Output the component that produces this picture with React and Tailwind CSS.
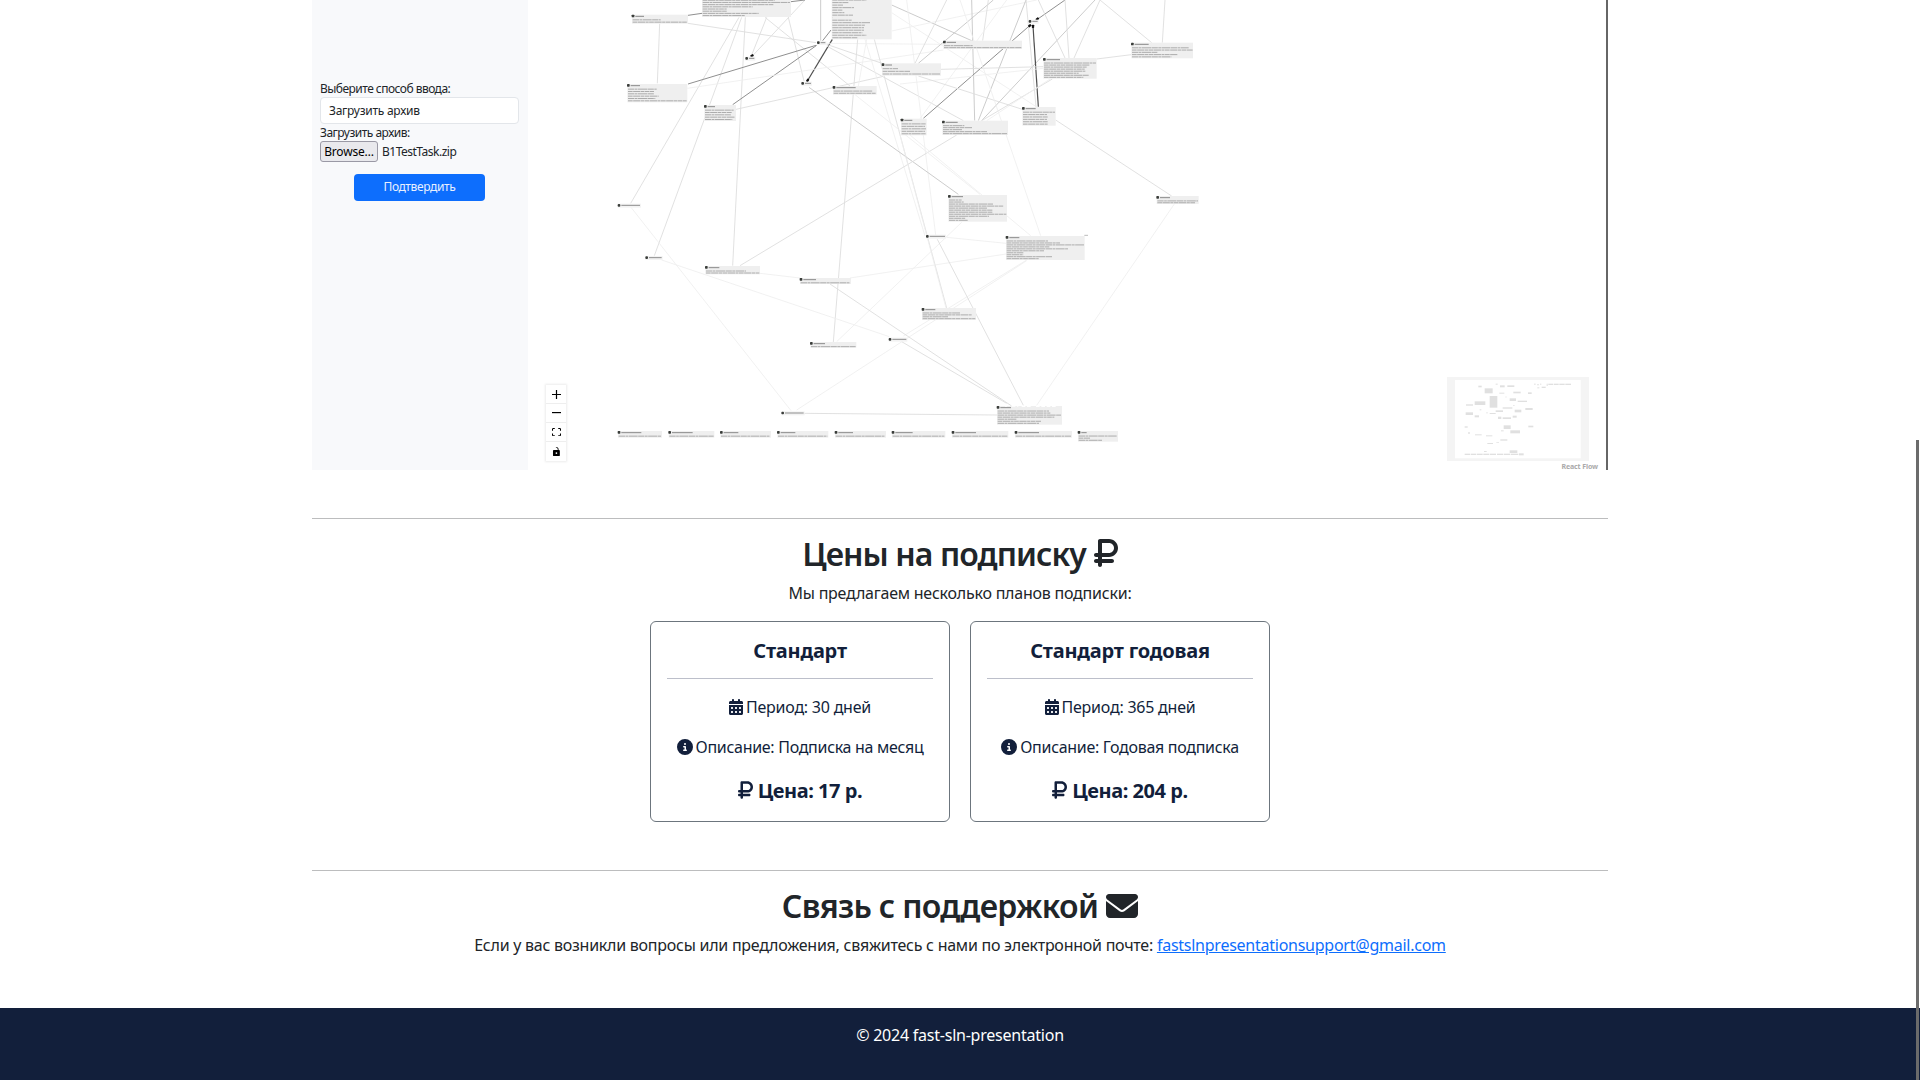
import { FaRubleSign, FaCalendarDays, FaCircleInfo, FaEnvelope } from "react-icons/fa6";

// Diagram units are thirds of a pixel.
// Edge: [x1, y1, x2, y2, tone], tone 0 = faint ... 4 = black
const EDGES = [
  [2064, 46, 2106, 40, 3], [2064, 70, 2448, 128, 1], [1979, 71, 1972, 250, 1],
  [2217, 52, 1892, 610, 1], [2225, 52, 1963, 767, 1], [2236, 52, 2198, 797, 1],
  [2300, 52, 2255, 165, 1], [2415, 0, 2260, 165, 1], [2295, 52, 2550, 258, 1],
  [2365, 52, 2412, 243, 1], [2373, 5, 2415, 0, 3], [2462, 0, 2462, 122, 2],
  [2493, 90, 2468, 122, 3], [2497, 118, 2422, 243, 4], [2448, 136, 2064, 252, 3],
  [2450, 136, 2198, 314, 3], [2062, 265, 2830, 150, 0], [2208, 328, 2646, 230, 1],
  [2480, 130, 2830, 133, 0], [2480, 133, 2646, 190, 1], [2480, 138, 2890, 362, 1],
  [2573, 118, 2500, 1026, 1], [2600, 118, 2575, 258, 0], [2623, 118, 2840, 924, 1],
  [2595, 118, 2775, 708, 0], [2675, 15, 2915, 122, 2], [2675, 38, 3110, 321, 0],
  [2675, 93, 3110, 0, 0], [2720, 0, 2807, 705, 0], [2427, 262, 2875, 583, 2],
  [2220, 797, 2870, 405, 1], [2565, 284, 2940, 583, 0], [2840, 0, 2745, 190, 1],
  [2980, 0, 2755, 190, 2], [2915, 0, 2924, 362, 2], [2965, 0, 2948, 122, 1],
  [3078, 0, 2935, 362, 2], [3195, 0, 3112, 58, 3], [3285, 0, 2945, 362, 2],
  [3020, 0, 2760, 356, 0], [3090, 76, 2770, 355, 3], [3099, 78, 3115, 320, 4],
  [3078, 0, 3108, 320, 1], [3115, 0, 3195, 174, 1], [3195, 0, 3207, 174, 1],
  [3300, 0, 3222, 174, 1], [3300, 0, 3455, 128, 1], [3495, 0, 3487, 128, 1],
  [3290, 177, 3394, 164, 1], [2823, 208, 3130, 200, 1], [2700, 252, 3130, 205, 0],
  [3157, 237, 2945, 362, 1], [3150, 237, 2960, 362, 0], [3167, 360, 3515, 588, 1],
  [2755, 228, 3067, 328, 1], [2880, 0, 3122, 707, 0], [2730, 405, 3092, 707, 0],
  [3523, 612, 3110, 1216, 0], [2885, 667, 2510, 1025, 0], [2840, 712, 3018, 730, 0],
  [2550, 834, 3018, 762, 0], [3080, 780, 2710, 1008, 0], [3080, 782, 2390, 1230, 0],
  [2812, 718, 3070, 1216, 1], [2490, 852, 3035, 1218, 1], [2705, 1025, 3020, 1210, 1],
  [2700, 405, 2838, 924, 0], [2412, 1240, 2991, 1245, 1], [1893, 622, 2373, 1232, 0],
  [1985, 780, 2668, 1010, 0], [2280, 820, 2400, 834, 0],
];
const TONES = [
  ["#eeeeee", 2.5], ["#dedede", 2.7], ["#c6c6c6", 2.7], ["#8f8f8f", 3], ["#505050", 3.6],
];

// Node: [x, y, w, h, titleWidth, [row widths]]
const NODES = [
  [1896, 44, 168, 27, 26, [84, 163]],
  [2106, -12, 267, 63, 0, [260, 216, 262, 213, 150, 72, 72, 168, 126]],
  [2495, -14, 180, 132, 0, [72, 102, 48, 32, 65, 30, 36, 62, 0, 58, 113, 98, 95, 95, 90, 102, 75]],
  [1882, 252, 180, 55, 28, [86, 78, 78, 92, 82, 176]],
  [2113, 315, 95, 48, 22, [86, 80, 78, 90, 82]],
  [2499, 258, 131, 26, 58, [116, 126]],
  [2646, 190, 177, 37, 20, [46, 82, 172]],
  [2703, 356, 77, 50, 24, [72, 70, 73, 70, 72]],
  [2830, 122, 236, 25, 28, [86, 232]],
  [2827, 362, 197, 43, 36, [64, 88, 58, 132, 192]],
  [3067, 321, 100, 56, 30, [96, 72, 74, 72, 74, 74]],
  [3130, 174, 160, 62, 40, [156, 136, 128, 122, 124, 104, 134, 118]],
  [3394, 128, 185, 47, 42, [170, 182, 76, 136, 118]],
  [2845, 585, 176, 80, 34, [38, 44, 132, 164, 114, 130, 130, 172, 120, 50, 56]],
  [3470, 588, 126, 24, 30, [122, 114]],
  [3018, 708, 236, 72, 30, [124, 160, 232, 128, 184, 112, 50, 50, 136, 96]],
  [2116, 798, 164, 25, 32, [120, 160]],
  [2400, 834, 153, 18, 38, [148]],
  [2431, 1026, 138, 17, 34, [134]],
  [2766, 924, 162, 36, 30, [112, 148, 76, 158]],
  [2991, 1218, 195, 56, 32, [154, 158, 190, 170, 56, 130, 124]],
  [1854, 1293, 132, 20, 60, [127]],
  [2006, 1293, 137, 20, 62, [133]],
  [2161, 1293, 152, 20, 44, [147]],
  [2332, 1293, 153, 20, 44, [148]],
  [2505, 1293, 153, 20, 44, [148]],
  [2676, 1293, 160, 20, 52, [155]],
  [2856, 1293, 169, 20, 62, [164]],
  [3045, 1293, 171, 20, 62, [166]],
  [3234, 1293, 120, 32, 16, [114, 34, 70]],
];

// Nodes that hold only a title: [x, y, titleWidth]
const LABELS = [
  [2455, 128, 14], [2240, 175, 16], [2408, 250, 18], [3090, 64, 16], [2782, 709, 46],
  [1857, 616, 56], [1940, 773, 38], [2670, 1018, 42], [2348, 1239, 56],
];

// Arrow heads: [x, y, rotation]
const ARROWS = [
  [2256, 167, 150], [2423, 241, 120], [3089, 77, -40], [3099, 79, -90], [3112, 57, 140],
];

const MINI = [
  [176, 76, 10, 5], [228, 70, 6, 3], [241, 75, 14, 6], [263, 75, 21, 5], [195, 84, 24, 15],
  [239, 97, 15, 3], [281, 94, 22, 5], [325, 96, 11, 5], [210, 107, 23, 35], [165, 123, 32, 11],
  [270, 114, 19, 8], [294, 121, 28, 4], [139, 132, 21, 4], [249, 141, 29, 4], [317, 143, 22, 6],
  [138, 156, 22, 8], [165, 165, 13, 6], [228, 150, 22, 5], [285, 148, 20, 8], [210, 158, 18, 3],
  [235, 169, 10, 7], [249, 171, 25, 5], [279, 166, 12, 6], [252, 195, 21, 11], [326, 196, 15, 5],
  [135, 198, 9, 4], [244, 210, 8, 3], [272, 210, 29, 9], [166, 222, 20, 3], [199, 225, 19, 3],
  [145, 216, 6, 4], [242, 237, 21, 4], [203, 248, 17, 3], [230, 246, 8, 2], [193, 272, 8, 3],
  [270, 270, 23, 8], [135, 280, 16, 4], [153, 280, 16, 4], [171, 280, 18, 4], [191, 280, 18, 4],
  [211, 280, 18, 4], [232, 280, 18, 4], [252, 280, 20, 4], [274, 280, 22, 4], [298, 279, 14, 6],
  [343, 70, 5, 3], [353, 71, 4, 4], [361, 70, 4, 3], [381, 70, 3, 7], [386, 70, 14, 4],
  [402, 70, 15, 4], [419, 70, 16, 4], [437, 70, 17, 4], [353, 81, 6, 3], [366, 79, 12, 4],
  [180, 147, 5, 3], [200, 156, 4, 3], [257, 109, 4, 2], [280, 135, 5, 2],
];

function Diagram() {
  return (
    <svg className="block h-[470px] w-[800px] shrink-0" viewBox="1584 0 2400 1410">
      {EDGES.map(([a, b, c, d, t], i) => (
        <line key={i} x1={a} y1={b} x2={c} y2={d} stroke={TONES[t][0]} strokeWidth={TONES[t][1]} />
      ))}
      {ARROWS.map(([x, y, r], i) => (
        <g key={i} transform={`translate(${x} ${y}) rotate(${r})`}>
          <rect x="-5" y="-3.5" width="10" height="7" rx="2" fill="#111" />
        </g>
      ))}
      {NODES.map(([x, y, w, h, title, rows], i) => {
        const top = title ? 12 : 3;
        const step = (h - top - 1) / rows.length;
        return (
          <g key={i}>
            <rect x={x} y={y} width={w} height={h} fill="#efefef" />
            {title > 0 && (
              <>
                <rect x={x - 1} y={y} width="8" height="8" rx="2" fill="#3a3d3a" />
                <line x1={x + 10} x2={x + 10 + title} y1={y + 5} y2={y + 5} stroke="#8a8a8a" strokeWidth="3" />
              </>
            )}
            {rows.map((r, j) => (
              <line
                key={j}
                x1={x + 2}
                x2={x + 2 + r}
                y1={y + top + step * (j + 0.5)}
                y2={y + top + step * (j + 0.5)}
                stroke="#989898"
                strokeWidth="2.3"
                strokeDasharray={j % 2 ? "14 1.5 22 1.5 9 1.5" : "19 1.5 8 1.5 27 1.5"}
              />
            ))}
          </g>
        );
      })}
      {LABELS.map(([x, y, w], i) => (
        <g key={i}>
          <rect x={x - 4} y={y - 5} width={w + 14} height="12" fill="#f3f3f3" />
          <rect x={x - 4} y={y - 4} width="8" height="8" rx="3" fill="#3a3d3a" />
          <line x1={x + 7} x2={x + 7 + w} y1={y} y2={y} stroke="#8f8f8f" strokeWidth="3" />
        </g>
      ))}
      <line x1="3253" x2="3264" y1="706" y2="706" stroke="#999" strokeWidth="2" />
      <path d="M3000 1213l20 6M3035 1218h20M3065 1219h30M3108 1219h60" stroke="#fff" strokeWidth="4" strokeDasharray="11 5" />
    </svg>
  );
}

const CONTROLS = [
  { box: "0 0 32 32", d: "M32 18.133H18.133V32h-4.266V18.133H0v-4.266h13.867V0h4.266v13.867H32z" },
  { box: "0 0 32 5", d: "M0 0h32v4.2H0z" },
  {
    box: "0 0 32 30",
    d: "M3.692 4.63c0-.53.4-.938.939-.938h5.215V0H4.708C2.13 0 0 2.054 0 4.63v5.216h3.692V4.631zM27.354 0h-5.2v3.692h5.17c.53 0 .984.4.984.939v5.215H32V4.631A4.624 4.624 0 0027.354 0zm.954 24.83c0 .532-.4.94-.939.94h-5.215v3.768h5.215c2.577 0 4.631-2.13 4.631-4.707v-5.139h-3.692v5.139zm-23.677.94c-.531 0-.939-.4-.939-.94v-5.138H0v5.139c0 2.577 2.13 4.707 4.708 4.707h5.138V25.77H4.631z",
  },
  {
    box: "0 0 25 32",
    d: "M21.333 10.667H19.81V7.619C19.81 3.429 16.38 0 12.19 0c-4.114 1.828-1.37 2.133.305 2.438 1.676.305 4.42 2.59 4.42 5.181v3.048H3.047A3.056 3.056 0 000 13.714v15.238A3.056 3.056 0 003.048 32h18.285a3.056 3.056 0 003.048-3.048V13.714a3.056 3.056 0 00-3.048-3.047zM12.19 24.533a3.056 3.056 0 01-3.047-3.047 3.056 3.056 0 013.047-3.048 3.056 3.056 0 013.048 3.048 3.056 3.056 0 01-3.048 3.047z",
  },
];

function Controls() {
  return (
    <div className="absolute bottom-[9px] left-[18px] flex w-5 flex-col bg-white shadow-[0_0_2px_1px_rgba(0,0,0,0.08)]">
      {CONTROLS.map((c) => (
        <button key={c.d} className="flex h-[19px] items-center justify-center border-b border-[#eee] last:border-b-0">
          <svg viewBox={c.box} className="max-h-[9px] w-[9px]">
            <path d={c.d} />
          </svg>
        </button>
      ))}
    </div>
  );
}

function MiniMap() {
  return (
    <div className="absolute right-[17px] bottom-[9px] h-[84px] w-[142px] bg-[#f4f4f4]">
      <svg viewBox="82 50 426 252" className="h-full w-full">
        <rect x="106" y="59" width="377" height="235" fill="#fff" />
        {MINI.map(([x, y, w, h], i) => (
          <rect key={i} x={x} y={y} width={w} height={h} fill="#e0e0e0" />
        ))}
      </svg>
    </div>
  );
}

function Sidebar() {
  return (
    <aside className="flex w-54 shrink-0 flex-col bg-[#f8f9fb] px-2 pt-20 text-[12px] leading-[17px] tracking-[-0.25px]">
      <label className="tracking-[-0.53px]">Выберите способ ввода:</label>
      <div className="flex h-[27px] w-[199px] items-center rounded-[4px] border border-[#e3e6ea] bg-white px-2">Загрузить архив</div>
      <label className="tracking-[-0.5px]">Загрузить архив:</label>
      <div className="flex items-center gap-1">
        <button className="h-[21px] w-[58px] rounded-[3px] border border-[#9a99a5] bg-[#e9e9ed] text-center leading-[18px] tracking-[-0.18px] text-black">Browse…</button>
        <span className="-mt-px tracking-[-0.5px]">B1TestTask.zip</span>
      </div>
      <button className="mt-3 ml-[34px] h-[27px] w-[131px] rounded-[4px] bg-[#0d6efd] pb-0.5 tracking-[-0.35px] text-[#e8f0ff]">Подтвердить</button>
    </aside>
  );
}

function Plan({ title, period, description, price }) {
  return (
    <article className="flex h-[201px] w-[300px] flex-col items-center rounded-md border border-[#6c757d] px-4 pt-[15px] text-[#121f3b]">
      <h3 className="text-xl leading-7 font-bold tracking-[-0.22px]">{title}</h3>
      <hr className="mt-[13px] w-full border-[#bcbfca]" />
      <p className="mt-4 flex items-center gap-[3px] leading-6">
        <FaCalendarDays className="h-4 w-3.5" />
        <span>{period}</span>
      </p>
      <p className="mt-4 flex items-center gap-[3px] leading-6 tracking-[-0.3px]">
        <FaCircleInfo className="size-4" />
        <span>{description}</span>
      </p>
      <p className="mt-5 flex items-center gap-[5px] text-xl leading-6 font-bold tracking-[-0.45px]">
        <FaRubleSign className="h-5 w-[15px] -translate-y-px" />
        <span>{price}</span>
      </p>
    </article>
  );
}

export default function App() {
  return (
    <div className="relative flex h-[1080px] w-full flex-col overflow-hidden bg-white font-['Noto_Sans',sans-serif] text-base tracking-[-0.23px] text-[#212529]">
      <main className="mx-auto flex w-[1296px] grow flex-col">
        <section className="flex h-[470px]">
          <Sidebar />
          <div className="relative flex grow border-r-2 border-[#666]">
            <Diagram />
            <Controls />
            <MiniMap />
            <span className="absolute right-2 bottom-[-3px] text-[7px] leading-3 font-bold tracking-[-0.1px] text-[#aaa]">React Flow</span>
          </div>
        </section>

        <section className="mt-12 flex h-[352px] flex-col items-center border-t border-[#bcbdbe] pt-4">
          <h2 className="flex items-center gap-2 text-[32px] leading-[38px] font-semibold tracking-[-0.92px]">
            <span>Цены на подписку</span>
            <FaRubleSign className="h-8 w-6 -translate-y-px" />
          </h2>
          <p className="mt-2 leading-6">Мы предлагаем несколько планов подписки:</p>
          <div className="mt-4 flex gap-5">
            <Plan title="Стандарт" period="Период: 30 дней" description="Описание: Подписка на месяц" price="Цена: 17 р." />
            <Plan title="Стандарт годовая" period="Период: 365 дней" description="Описание: Годовая подписка" price="Цена: 204 р." />
          </div>
        </section>

        <section className="flex flex-col items-center border-t border-[#bcbdbe] pt-4">
          <h2 className="flex items-center gap-2 text-[32px] leading-[38px] font-semibold tracking-[-0.68px]">
            <span>Связь с поддержкой</span>
            <FaEnvelope className="size-8" />
          </h2>
          <p className="mt-2 leading-6 tracking-[-0.25px]">
            Если у вас возникли вопросы или предложения, свяжитесь с нами по электронной почте:{" "}
            <a className="text-[#0d6efd] underline">fastslnpresentationsupport@gmail.com</a>
          </p>
        </section>
      </main>

      <footer className="flex h-[72px] justify-center bg-[#121f3b] pt-[15px] leading-6 text-white">© 2024 fast-sln-presentation</footer>
      <div className="absolute top-[440px] right-px h-[640px] w-[3px] bg-[#6b6b6b]" />
    </div>
  );
}
